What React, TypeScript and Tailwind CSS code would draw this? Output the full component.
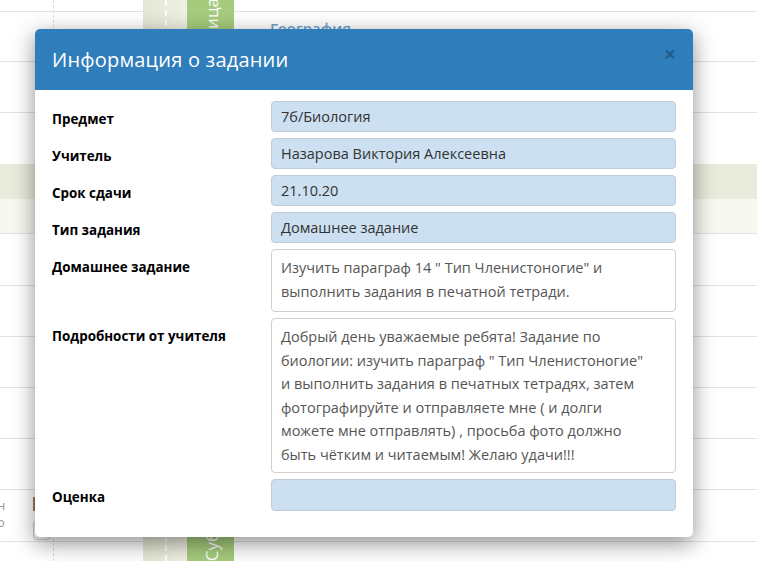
import React from 'react';

const ROWS = [12, 50, 51, 51, 35, 35, 52, 51, 51, 51, 51, 52, 40];

function Lines() {
  return (
    <div className="flex flex-col">
      {ROWS.map((h, i) => (
        <div
          key={i}
          style={{ height: h }}
          className={
            i === 4
              ? 'bg-[#e9ebdc]'
              : i === 5
              ? 'bg-[#f7f8f0] border-b border-[#e2e2e2]'
              : i === 3
              ? ''
              : 'border-b border-[#e2e2e2]'
          }
        />
      ))}
    </div>
  );
}

const FIELDS: { label: string; value?: string; lines?: string[]; h: string }[] = [
  { label: 'Предмет', value: '7б/Биология', h: 'h-[31px]' },
  { label: 'Учитель', value: 'Назарова Виктория Алексеевна', h: 'h-[31px]' },
  { label: 'Срок сдачи', value: '21.10.20', h: 'h-[31px]' },
  { label: 'Тип задания', value: 'Домашнее задание', h: 'h-[31px]' },
  {
    label: 'Домашнее задание',
    lines: ['Изучить параграф 14 " Тип Членистоногие" и', 'выполнить задания в печатной тетради.'],
    h: 'h-[63px]',
  },
  {
    label: 'Подробности от учителя',
    lines: [
      'Добрый день уважаемые ребята! Задание по',
      'биологии: изучить параграф " Тип Членистоногие"',
      'и выполнить задания в печатных тетрадях, затем',
      'фотографируйте и отправляете мне ( и долги',
      'можете мне отправлять) , просьба фото должно',
      'быть чётким и читаемым! Желаю удачи!!!',
    ],
    h: 'h-[155px]',
  },
  { label: 'Оценка', value: '', h: 'h-[32px]' },
];

export default function App() {
  return (
    <div className="relative w-[757px] h-[561px] overflow-hidden bg-white font-['Open_Sans',sans-serif]">
      {/* timetable behind the dialog */}
      <div className="flex h-full">
        <div className="relative w-[143px]">
          <Lines />
          <div className="absolute left-[53px] top-0 h-full border-l border-dashed border-[#dcdcdc]" />
          <div className="absolute left-0 top-[497px] text-[13px] leading-[17px] text-[#999]">
            <div className="-ml-[3px]">н</div>
            <div className="-ml-[3px]">о</div>
          </div>
          <div className="absolute left-[33px] top-[497px] w-[14px] h-[14px] bg-[#a0785a]" />
          <div className="absolute left-[33px] top-[520px] w-[18px] h-[20px] rounded-sm border border-[#ccc] bg-[#f4f4f4]" />
        </div>
        <div className="relative w-[44px] bg-gradient-to-r from-[#e4e6d2] to-[#f0f0e4]">
          <div className="absolute left-[22px] top-0 h-full border-l-2 border-dashed border-white" />
        </div>
        <div className="relative w-[47px] bg-[#a6cb7d] text-white text-[17px]">
          <div className="absolute left-[12px] top-[-2px] [writing-mode:vertical-rl] rotate-180">Пятница</div>
          <div className="absolute left-[12px] bottom-[0px] [writing-mode:vertical-rl] rotate-180">Суббота</div>
        </div>
        <div className="relative flex-1">
          <Lines />
          <div className="absolute left-[36px] top-[17px] text-[15px] font-semibold text-[#6d9fd0]">География</div>
        </div>
      </div>

      {/* dialog */}
      <div className="absolute left-[35px] top-[29px] w-[658px] h-[508px] rounded-[5px] bg-white shadow-[0_6px_22px_rgba(0,0,0,0.45)] overflow-hidden">
        <div className="flex items-center justify-between h-[61px] bg-[#2f7ebb] pl-[17px] pr-[17px]">
          <h4 className="text-[20px] text-white tracking-[0.2px]">Информация о задании</h4>
          <span className="text-[21px] font-bold leading-none text-black opacity-25 -mt-[10px]">×</span>
        </div>
        <div className="flex flex-col gap-[6px] px-[17px] pt-[11px]">
          {FIELDS.map(f => (
            <div key={f.label} className="flex">
              <div className="w-[219px] pt-[9px] text-[13.4px] leading-[18px] font-bold text-black">{f.label}</div>
              {f.lines ? (
                <div className={`flex-1 ${f.h} rounded-[4px] border border-[#cfcfcf] bg-white px-[9px] py-[6px] text-[14.5px] leading-[23.5px] text-[#555] whitespace-nowrap`}>
                  {f.lines.map((l, i) => <div key={i}>{l}</div>)}
                </div>
              ) : (
                <div className={`flex-1 ${f.h} flex items-center rounded-[4px] border border-[#bfcbd6] bg-[#cce0f1] px-[9px] text-[14.5px] text-[#333]`}>
                  {f.value}
                </div>
              )}
            </div>
          ))}
        </div>
      </div>
    </div>
  );
}
